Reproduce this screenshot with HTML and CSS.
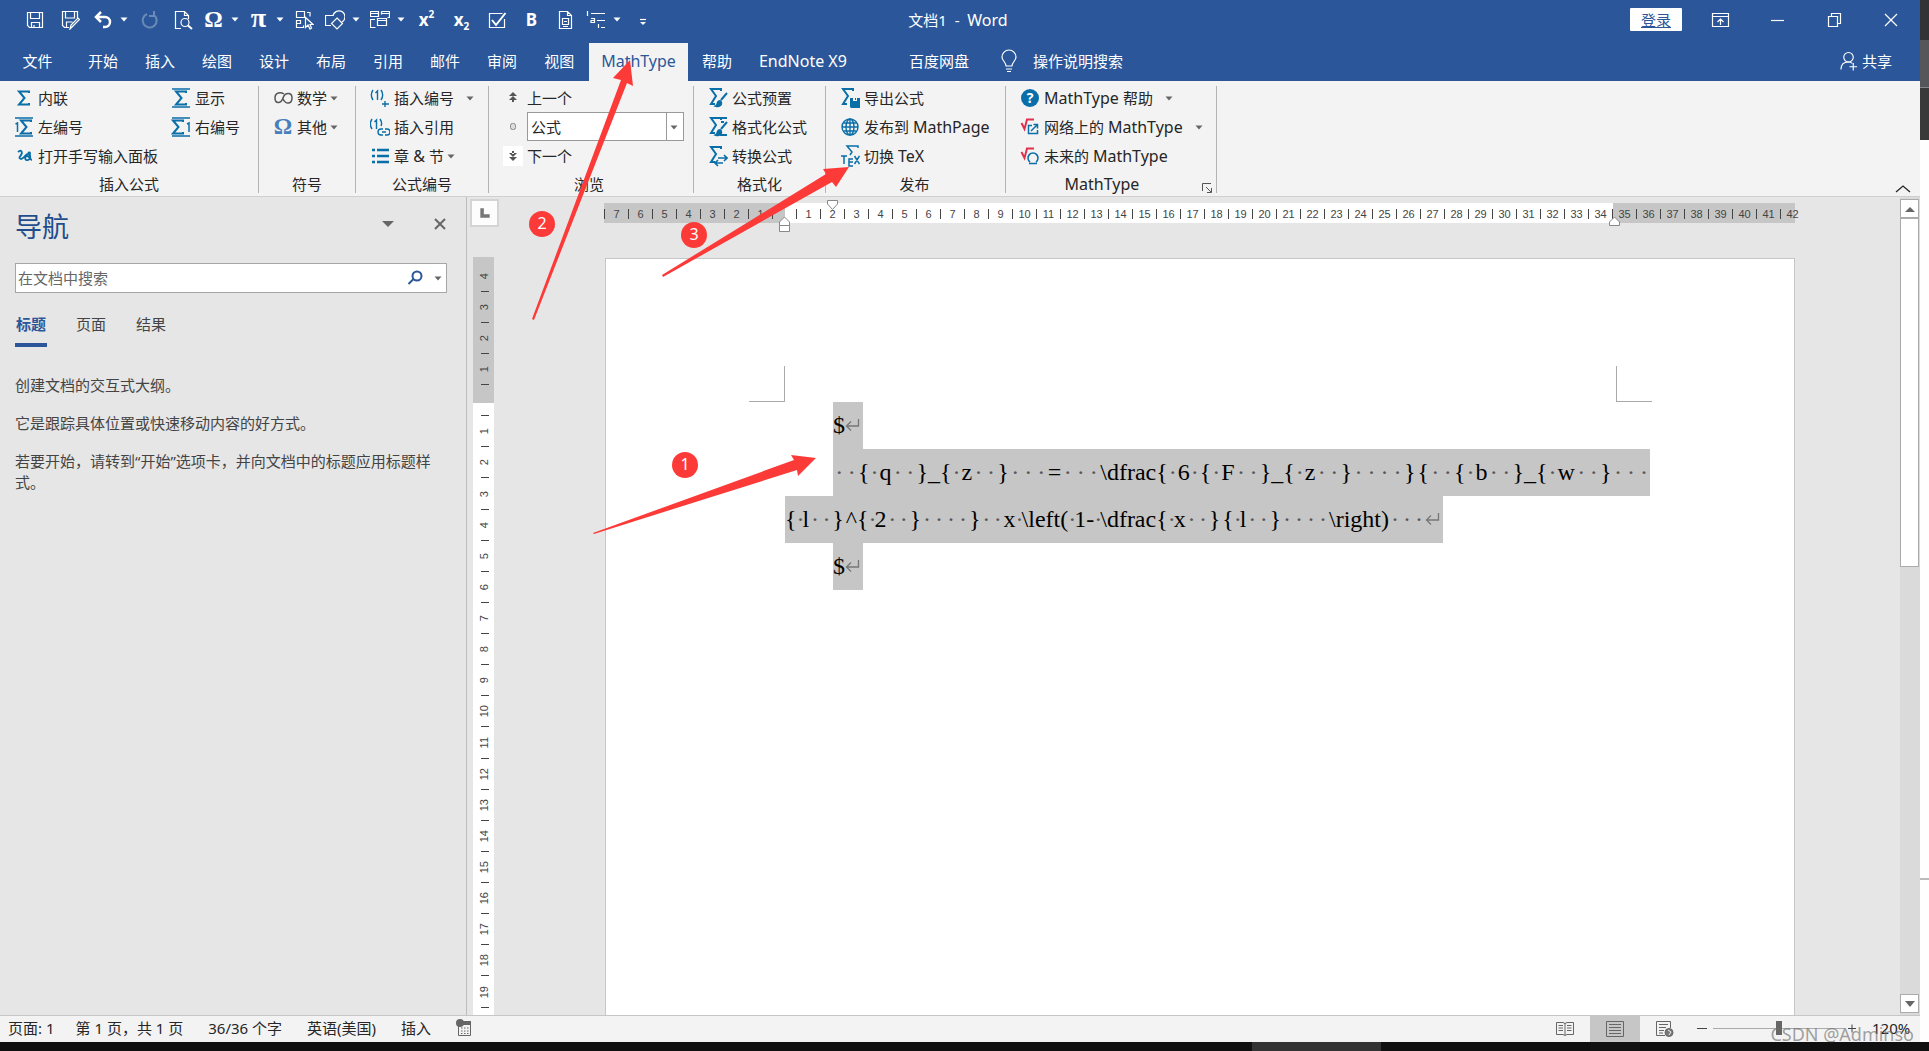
FILE: index.html
```html
<!DOCTYPE html>
<html lang="zh-CN">
<head>
<meta charset="utf-8">
<title>文档1 - Word</title>
<link rel="stylesheet" href="styles.css">
</head>
<body>
<svg class="defs" aria-hidden="true">
  <symbol id="sigma" viewBox="0 0 20 20"><path d="M15 5V3.500H5l5.500 6.500L5 16.500h10V15" fill="none" stroke="currentColor" stroke-width="2"/></symbol>
  <symbol id="sigma-s" viewBox="0 0 20 24"><path d="M13 5V3H3l5 7-5 8h4" fill="none" stroke="currentColor" stroke-width="2"/></symbol>
  <symbol id="caret" viewBox="0 0 8 5"><path d="M0.500 0.500h7L4 4.500z" fill="currentColor"/></symbol>
  <symbol id="enter" viewBox="0 0 16 14"><path d="M13.500 1v7H1.500M6 3.500L1.500 8 6 12.500" fill="none" stroke="#777" stroke-width="1.300"/></symbol>
  <symbol id="root" viewBox="0 0 20 20"><path d="M1.500 6l3 6L7 2.500h7" fill="none" stroke="#e0304e" stroke-width="2"/></symbol>
</svg>
<div class="screen">
<div class="desktop">
<main class="word">
  <header class="titlebar">
    <div class="quick">
      <button aria-label="保存"><svg viewBox="0 0 20 20"><path d="M2.500 2.500h15v15h-13l-2-2zM5.500 2.500v6h9v-6M6.500 17.500v-5h8v5M9 15v2"/></svg></button>
      <button aria-label="另存为"><svg viewBox="0 0 20 20"><path d="M9 17.500H4.500l-2-2v-14h15v7M5.500 2v6h9V2M6.500 17v-5h6M10 19l1-4 7-7 1.500 1.500-7 7z"/></svg></button>
      <span class="split"><button aria-label="撤消"><svg viewBox="0 0 20 20"><path d="M3 7h9a5 5 0 0 1 0 10h-2M8 2L3 7l5 5" stroke-width="2.500"/></svg></button><svg class="c"><use href="#caret"/></svg></span>
      <button class="dim" aria-label="重做"><svg viewBox="0 0 20 20"><path d="M14 5a7 7 0 1 1-7-1M14 1v5h-5" stroke-width="2"/></svg></button>
      <button class="tight" aria-label="打印预览"><svg viewBox="0 0 20 20"><path d="M8 18.500H2.500v-17h9l4 4V9M11.500 1.500v4h4"/><circle cx="12" cy="12.500" r="4"/><path d="M15 15.500l4 3.500" stroke-width="2"/></svg></button>
      <span class="split"><button class="sym" aria-label="符号">Ω</button><svg class="c"><use href="#caret"/></svg></span>
      <span class="split"><button class="sym pi" aria-label="公式">π</button><svg class="c"><use href="#caret"/></svg></span>
      <button class="tight" aria-label="选择"><svg viewBox="0 0 20 20"><path d="M2.500 1.500h8v6h-8zM2.500 10.500h4v3h-4zM2.500 13.500v4h7v-2M13 2.500h3v4"/><path d="M11.500 7.500v10l2.500-2.500 2 4 1.500-1-1.500-3.500h3z" fill="#2b579a"/></svg></button>
      <span class="split"><button aria-label="形状"><svg viewBox="0 0 20 20"><path d="M6 15.500H.5v-10H8"/><path d="M8 6a6 6 0 1 1 9 6"/><path d="M12 8l5.500 5.500L12 19l-5.500-5.500z"/></svg></button><svg class="c"><use href="#caret"/></svg></span>
      <span class="split"><button aria-label="窗口"><svg viewBox="0 0 20 20"><path d="M.5 1.500h8v5h-8zM11.500 1.500h8v6h-2M11.500 1.500v3M5 9.500H.5v8h5M.5 3.500h8M11.500 3.500h8M7.500 8.500h9v7h-9zM7.500 10.500h9"/></svg></button><svg class="c"><use href="#caret"/></svg></span>
      <button class="xs" aria-label="上标">x<sup>2</sup></button>
      <button class="xs" aria-label="下标">x<sub>2</sub></button>
      <button aria-label="复选框"><svg viewBox="0 0 20 20"><path d="M17.500 9v8.500h-15v-14h13"/><path d="M5 10l4 5L18.500 3" stroke-width="2"/></svg></button>
      <button class="xs" aria-label="加粗">B</button>
      <button class="tight" aria-label="页面"><svg viewBox="0 0 20 20"><path d="M4.500 1.500h8l4 4v13h-12zM12.500 1.500v4h4M7.500 8.500h6v6h-6zM9 11.500h3M8 16.500h5"/></svg></button>
      <span class="split"><button aria-label="多级列表"><svg viewBox="0 0 20 20"><path d="M1.500 1v5M5 3.500h14M5 8.500h3.500v4H5v-2h3.500M11 10.500h8M12.500 14v4M15 17.500h4"/></svg></button><svg class="c"><use href="#caret"/></svg></span>
      <button aria-label="自定义"><svg viewBox="0 0 20 20"><path d="M7 9.500h6"/><path d="M7 12h6l-3 3z" fill="#fff" stroke="none"/></svg></button>
    </div>
    <h1>文档1&nbsp; -&nbsp; <span class="lat">Word</span></h1>
    <div class="wincontrols">
      <button class="login">登录</button>
      <button class="wc" aria-label="功能区显示选项"><svg viewBox="0 0 20 20"><path d="M1.500 3.500h16v13h-16zM1.500 6.500h16M9.500 15V9M6.500 12l3-3 3 3"/></svg></button>
      <button class="wc" aria-label="最小化"><svg viewBox="0 0 20 20"><path d="M3 10.500h13"/></svg></button>
      <button class="wc" aria-label="还原"><svg viewBox="0 0 20 20"><path d="M3.500 6.500h9v10h-9zM6.500 6.500v-3h9v10h-3"/></svg></button>
      <button class="wc" aria-label="关闭"><svg viewBox="0 0 20 20"><path d="M3 4l12 12M15 4L3 16"/></svg></button>
    </div>
  </header>
  <nav class="tabs">
    <button class="file">文件</button><button>开始</button><button>插入</button><button>绘图</button><button>设计</button><button>布局</button><button>引用</button><button>邮件</button><button>审阅</button><button>视图</button><button class="active lat">MathType</button><button>帮助</button><button class="lat">EndNote X9</button><button class="baidu">百度网盘</button>
    <button class="tell"><svg viewBox="0 0 18 24"><path d="M6 17c0-4-4-5-4-9a7 7 0 0 1 14 0c0 4-4 5-4 9zM6 20h6M7 22.500h4"/></svg>操作说明搜索</button>
    <button class="share"><svg viewBox="0 0 20 22"><circle cx="10" cy="7" r="5"/><path d="M2 20c0-5 3-8 8-8 2 0 3 .5 4 1.500M11 17h8M15 13v8"/></svg>共享</button>
  </nav>
  <section class="ribbon">
    <div class="group g1">
      <div class="cmds two">
        <button><svg><use href="#sigma"/></svg>内联</button>
        <button><svg viewBox="0 0 20 20"><path d="M1 1h18M1 19h18" stroke="currentColor" stroke-width="1.500"/><use href="#sigma"/></svg>显示</button>
        <button><svg viewBox="0 0 20 20"><path d="M1 1h18M1 19h18M1.500 7l2-1v9" fill="none" stroke="currentColor" stroke-width="1.500"/><use href="#sigma" x="2"/></svg>左编号</button>
        <button><svg viewBox="0 0 20 20"><path d="M1 1h18M1 19h18M16 7l2-1v9" fill="none" stroke="currentColor" stroke-width="1.500"/><use href="#sigma" x="-3"/></svg>右编号</button>
        <button class="wide"><svg viewBox="0 0 20 20"><path d="M4 6c3-3 5 0 3 3-1 2-3 3 0 4 3 0 4-5 7-5 3 0 3 5 0 6-3 1-4-3-1-4 3 0 3 4 5 4M15 9c2-1 1-4-1-2" fill="none" stroke="currentColor" stroke-width="1.800"/></svg>打开手写输入面板</button>
      </div>
      <h2>插入公式</h2>
    </div>
    <div class="group g2">
      <div class="cmds">
        <button><svg class="gray" viewBox="0 0 20 20"><path d="M11 6C8 4 2 4 2 10s6 6 8 0 9-6 9 0-6 7-9 1" fill="none" stroke="currentColor" stroke-width="1.500"/></svg>数学<svg class="c"><use href="#caret"/></svg></button>
        <button><b class="omega">Ω</b>其他<svg class="c"><use href="#caret"/></svg></button>
      </div>
      <h2>符号</h2>
    </div>
    <div class="group g3">
      <div class="cmds">
        <button><svg viewBox="0 0 20 20"><path d="M3 2c-2 3-2 7 0 10M11 2c2 3 2 7 0 10M5.500 5l2-2v9M15 13v6M12 16h7" fill="none" stroke="currentColor" stroke-width="1.400"/></svg>插入编号<svg class="c far"><use href="#caret"/></svg></button>
        <button><svg viewBox="0 0 20 20"><path d="M2 2c-2 3-2 7 0 10M10 2c2 3 2 5 1 7M4.500 5l2-2v9M13 12h-2a2.500 2.500 0 0 0 0 6h2M15 12h2a2.500 2.500 0 0 1 0 6h-2M12 15h4" fill="none" stroke="currentColor" stroke-width="1.400"/></svg>插入引用</button>
        <button><svg viewBox="0 0 20 20"><path d="M2 4h3M2 10h3M2 16h3M7 4h12M7 10h12M7 16h12" stroke="currentColor" stroke-width="2.500"/></svg>章 <span class="lat">&nbsp;&amp;&nbsp;</span> 节<svg class="c"><use href="#caret"/></svg></button>
      </div>
      <h2>公式编号</h2>
    </div>
    <div class="group g4">
      <div class="cmds">
        <button><svg class="dark" viewBox="0 0 20 20"><path d="M10 4l4 4H6zM10 8l4 4H6zM9 11h2v3H9z" fill="currentColor"/></svg>上一个</button>
        <div class="browse"><svg class="dark" viewBox="0 0 20 20"><rect x="7.500" y="6.500" width="5" height="6" rx="2" fill="#ddd" stroke="#888"/></svg><label class="combo"><select aria-label="浏览对象"><option>公式</option></select><span><svg class="c"><use href="#caret"/></svg></span></label></div>
        <button class="next"><svg class="dark" viewBox="0 0 20 20"><path d="M10 15l4-4H6zM10 11l4-4H6zM9 5h2v3H9z" fill="currentColor"/></svg>下一个</button>
      </div>
      <h2>浏览</h2>
    </div>
    <div class="group g5">
      <div class="cmds">
        <button><svg class="lg" viewBox="0 0 20 24"><use href="#sigma-s"/><path d="M19 7l-6 7M12 15c-3 0-2 4-4 5 3 1 6-1 5-4z" fill="currentColor" stroke="currentColor" stroke-width="2"/></svg>公式预置</button>
        <button><svg class="lg" viewBox="0 0 20 24"><use href="#sigma-s"/><path d="M9 3h10M13 7h3M12 20h7" stroke="currentColor" stroke-width="2"/><path d="M19 7l-6 7M12 15c-3 0-2 4-4 5 3 1 6-1 5-4z" fill="currentColor" stroke="currentColor" stroke-width="2"/></svg>格式化公式</button>
        <button><svg class="lg" viewBox="0 0 20 24"><use href="#sigma-s"/><path d="M10 14h9M16 11l3 3-3 3M15 19H7M10 16l-3 3 3 3" fill="none" stroke="currentColor" stroke-width="1.600"/></svg>转换公式</button>
      </div>
      <h2>格式化</h2>
    </div>
    <div class="group g6">
      <div class="cmds">
        <button><svg class="lg" viewBox="0 0 20 24"><use href="#sigma-s"/><path d="M10 12h10v10H11l-1-1z" fill="currentColor"/><path d="M13 12h4v3h-4z" fill="#f3f3f3"/><path d="M15 12h1v2h-1z" fill="currentColor"/></svg>导出公式</button>
        <button><svg viewBox="0 0 20 20"><g fill="none" stroke="currentColor" stroke-width="1.400"><circle cx="10" cy="10" r="8"/><ellipse cx="10" cy="10" rx="4" ry="8"/><path d="M10 2v16M2 10h16M3.500 6h13M3.500 14h13"/></g></svg>发布到&nbsp;<span class="lat">MathPage</span></button>
        <button><svg class="lg" viewBox="0 0 20 24"><path d="M18 4V2H7l5 6-2 3M1 12h6M4 12v8M13 15H9v7h4M9 18h4M14.500 12l5 8M19.500 12l-5 8" fill="none" stroke="currentColor" stroke-width="1.500"/></svg>切换&nbsp;<span class="lat">TeX</span></button>
      </div>
      <h2>发布</h2>
    </div>
    <div class="group g7">
      <div class="cmds">
        <button><span class="q">?</span><span class="lat">MathType&nbsp;</span>帮助<svg class="c mid"><use href="#caret"/></svg></button>
        <button><svg viewBox="0 0 20 20"><use href="#root"/><path d="M12 8.500H8.500v8h9V13M11 14l6-6M13.500 7.500h4v4" fill="none" stroke="currentColor" stroke-width="1.500"/></svg>网络上的&nbsp;<span class="lat">MathType</span><svg class="c mid"><use href="#caret"/></svg></button>
        <button><svg viewBox="0 0 20 20"><use href="#root"/><path d="M10 16a5 5 0 1 1 6 0M9 17.500h8" fill="none" stroke="currentColor" stroke-width="1.600"/></svg>未来的&nbsp;<span class="lat">MathType</span></button>
      </div>
      <h2 class="lat">MathType</h2>
      <button class="launch" aria-label="对话框启动器"><svg viewBox="0 0 10 10"><path d="M.5 8V.5H9M4 4l5 5M9.500 5v4.500H5" fill="none" stroke="currentColor"/></svg></button>
    </div>
    <button class="collapse" aria-label="折叠功能区"><svg viewBox="0 0 16 10"><path d="M1 8l7-6 7 6" fill="none" stroke="currentColor" stroke-width="1.300"/></svg></button>
  </section>
  <section class="work">
    <aside class="pane">
      <div class="panehead"><h2>导航</h2><button aria-label="选项"><svg viewBox="0 0 12 12"><path d="M0 3h12L6 9z" fill="currentColor"/></svg></button><button aria-label="关闭窗格"><svg viewBox="0 0 12 12"><path d="M1 1l10 10M11 1L1 11" stroke="currentColor" stroke-width="2"/></svg></button></div>
      <div class="search"><input type="text" placeholder="在文档中搜索" aria-label="在文档中搜索"><button aria-label="搜索"><svg viewBox="0 0 16 16"><circle cx="10" cy="6" r="4.500"/><path d="M6.500 9L1.500 14"/></svg></button><svg class="c"><use href="#caret"/></svg></div>
      <div class="panetabs"><button class="on">标题</button><button>页面</button><button>结果</button></div>
      <p>创建文档的交互式大纲。</p>
      <p>它是跟踪具体位置或快速移动内容的好方式。</p>
      <p>若要开始，请转到“开始”选项卡，并向文档中的标题应用标题样式。</p>
    </aside>
    <div class="vcol">
      <button class="corner" aria-label="制表符"><svg viewBox="0 0 12 12"><path d="M3.500 2v6.500H10" fill="none" stroke="#777" stroke-width="3"/></svg></button>
      <ol class="vruler" id="vruler"></ol>
    </div>
    <div class="canvas">
      <div class="column">
        <div class="hwrap">
          <ol class="hruler" id="hruler"></ol>
          <svg class="mark first" viewBox="0 0 12 11"><path d="M.5.5h10V4l-5 5.500L.5 4z"/></svg>
          <svg class="mark left" viewBox="0 0 12 16"><path d="M.5 9.500V6l5-5 5 5v3.500zM.5 9.500h10v6H.5z"/></svg>
          <svg class="mark right" viewBox="0 0 12 11"><path d="M.5 9.500V6l5-5 5 5v3.500z"/></svg>
        </div>
        <article class="sheet">
          <i class="crop tl"></i><i class="crop tr"></i>
          <div class="ln ind">$<svg class="ent"><use href="#enter"/></svg></div>
          <div class="ln ind just"><i class="s2">·<b>·</b></i>{<i class="s1">·</i>q<i class="s2">·<b>·</b></i>}_{<i class="s1">·</i>z<i class="s2">·<b>·</b></i>}<i class="s3">·<b>·</b><b>·</b></i>=<i class="s3">·<b>·</b><b>·</b></i>\dfrac{<i class="s1">·</i>6<i class="s1">·</i>{<i class="s1">·</i>F<i class="s2">·<b>·</b></i>}_{<i class="s1">·</i>z<i class="s2">·<b>·</b></i>}<i class="s4">·<b>·</b><b>·</b><b>·</b></i>}<i class="gap"></i>{<i class="s2">·<b>·</b></i>{<i class="s1">·</i>b<i class="s2">·<b>·</b></i>}_{<i class="s1">·</i>w<i class="s2">·<b>·</b></i>}<i class="s3">·<b>·</b><b>·</b></i></div>
          <div class="ln">{<i class="s1">·</i>l<i class="s2">·<b>·</b></i>}<i class="gap"></i>^{<i class="s1">·</i>2<i class="s2">·<b>·</b></i>}<i class="s4">·<b>·</b><b>·</b><b>·</b></i>}<i class="s2">·<b>·</b></i>x<i class="s1">·</i>\left(<i class="s1">·</i>1-<i class="s1">·</i>\dfrac{<i class="s1">·</i>x<i class="s2">·<b>·</b></i>}<i class="gap"></i>{<i class="s1">·</i>l<i class="s2">·<b>·</b></i>}<i class="s4">·<b>·</b><b>·</b><b>·</b></i>\right)<i class="s3">·<b>·</b><b>·</b></i><svg class="ent"><use href="#enter"/></svg></div>
          <div class="ln ind">$<svg class="ent"><use href="#enter"/></svg></div>
        </article>
      </div>
    </div>
    <div class="scroll">
      <button aria-label="向上滚动"><svg viewBox="0 0 10 6"><path d="M0 6l5-5 5 5z" fill="currentColor"/></svg></button>
      <div class="thumb"></div>
      <button class="down" aria-label="向下滚动"><svg viewBox="0 0 10 6"><path d="M0 0h10L5 6z" fill="currentColor"/></svg></button>
    </div>
  </section>
  <footer class="status">
    <span class="pg">页面: 1</span><span>第 1 页，共 1 页</span><span>36/36 个字</span><span>英语(美国)</span><span>插入</span>
    <svg viewBox="0 0 16 18"><path d="M2.500 7v9.500h12v-12H7" fill="none" stroke="#666"/><path d="M7 2h8v4H7z" fill="#666"/><circle cx="4" cy="4" r="4" fill="#666"/><path d="M5 9h8M5 12h8M5 14.500h8" stroke="#666" stroke-dasharray="1.500 1.500"/></svg>
    <div class="views">
      <button aria-label="阅读视图"><svg viewBox="0 0 18 16"><path d="M.5 1.500h6.500l2 1 2-1h6.500v12H11l-2 1-2-1H.5zM9 2v12M2.500 4.500H7M2.500 7H7M2.500 9.500H7M11 4.500h4.500M11 7h4.500M11 9.500h4.500"/></svg></button>
      <button class="on" aria-label="页面视图"><svg viewBox="0 0 18 16"><path d="M.5.5h17v15H.5zM3 3.500h12M3 6.500h12M3 9.500h12M3 12.500h12"/></svg></button>
      <button aria-label="Web 版式"><svg viewBox="0 0 18 16"><path d="M9 14.500H.5V.5h14V7M3 3.500h9M3 6.500h7M3 9.500h5M3 12h4"/><circle cx="13" cy="11.500" r="4" fill="#777"/><path d="M12 9l3 2-2 3" stroke="#f3f3f3"/></svg></button>
    </div>
    <div class="zoom"><button aria-label="缩小"><svg viewBox="0 0 10 10"><path d="M0 5.500h10"/></svg></button><input type="range" min="0" max="100" value="50" aria-label="缩放"><button aria-label="放大"><svg viewBox="0 0 10 10"><path d="M1 5.500h8M5 1.500v8"/></svg></button><output>120%</output></div>
  </footer>
</main>
<div class="behind"><i class="b1"></i><i class="b2"></i><i class="b3"></i><i class="b4"></i></div>
</div>
<div class="taskbar"><i></i></div>
<svg class="notes" width="900" height="560" aria-hidden="true">
  <g fill="#fc3a38">
    <path d="M593 533L794 460l-3-5 25 3-18 18-1-6L594 534z"/>
    <path d="M532 319L621 80l-8-2 17-18 3 26-6-3L534 320z"/>
    <path d="M662 275L826 174l-3-5 26-2-13 20-4-5L663 277z"/>
    <circle cx="542" cy="224" r="13"/><circle cx="694" cy="235" r="13"/><circle cx="685" cy="465" r="13"/>
  </g>
  <g class="num"><text x="542" y="229">2</text><text x="694" y="240">3</text><text x="685" y="470">1</text></g>
</svg>
<div class="watermark">CSDN @Adminso</div>
</div>
<script src="script.js"></script>
</body>
</html>
```
FILE: styles.css
```css
* { box-sizing: border-box; }
body, h1, h2, p, ol { margin: 0; padding: 0; font-weight: normal; }
body { font: 15px/20px "Noto Sans", "Noto Sans CJK SC", sans-serif; color: #262626; }
button, input, select { font: inherit; color: inherit; background: none; border: 0; padding: 0; margin: 0; }
button { white-space: nowrap; }
i { font-style: normal; }
svg { display: block; flex: none; }
ol { list-style: none; }
.defs { position: absolute; width: 0; height: 0; }
.lat { font-size: 16px; }
.c { width: 8px; height: 5px; color: #666; }

.screen { position: relative; display: flex; flex-direction: column; height: 100vh; overflow: hidden; }
.desktop { flex: 1; display: flex; min-height: 0; }
.word { flex: 1; min-width: 0; display: flex; flex-direction: column; }
.behind { width: 9px; display: flex; flex-direction: column; background: #fefefe; }
.b1 { height: 40px; background: #333336; }
.b2 { height: 48px; background: #55565a; border-bottom: 1px solid #888; }
.b3 { height: 52px; background: #393939; }
.b4 { height: 740px; border-bottom: 2px solid #bbb; }
.taskbar { height: 9px; background: #101010; display: flex; padding-left: 1252px; }
.taskbar i { width: 129px; background: #333; }

/* title bar */
.titlebar { height: 43px; background: #2b579a; color: #fff; display: grid; grid-template-columns: 1fr auto 1fr; align-items: center; padding-bottom: 4px; }
.quick { display: flex; align-items: center; padding-left: 17px; }
.quick button { width: 35px; height: 28px; display: flex; align-items: center; justify-content: center; }
.quick .tight { width: 31px; }
.quick button svg { width: 20px; height: 20px; }
.titlebar button svg, .tabs svg { fill: none; stroke: #fff; stroke-width: 1.2; }
.split { display: flex; align-items: center; width: 45px; }
.quick .split button { width: 31px; }
.split .c { color: #fff; margin-left: 2px; }
.dim { opacity: .3; }
.quick .sym { font: bold 23px/24px "Liberation Serif", serif; }
.quick .pi { font-size: 28px; padding-bottom: 4px; }
.quick .xs { font-weight: bold; font-size: 17px; height: 22px; }
.xs sup, .xs sub { font-size: 10px; line-height: 10px; }
.xs sup { align-self: flex-start; }
.xs sub { align-self: flex-end; }
h1 { font-size: 15px; padding-right: 4px; }
.wincontrols { display: flex; justify-content: flex-end; align-items: center; }
.login { background: #fff; color: #2b579a; width: 52px; height: 23px; text-decoration: underline; margin-right: 10px; border-radius: 1px; }
.wc { width: 57px; height: 38px; display: flex; align-items: center; justify-content: center; }
.wc svg { width: 20px; height: 20px; }

/* ribbon tabs */
.tabs { height: 38px; background: #2b579a; color: #fff; display: flex; }
.tabs button { padding: 0 13px 2px 14px; color: #fff; }
.tabs .file { width: 74px; }
.tabs .active { background: #f3f3f3; color: #2b579a; padding: 0 12px 2px; margin-left: 2px; }
.tabs .baidu { margin-left: 35px; }
.tabs .tell { display: flex; align-items: center; gap: 15px; padding-left: 18px; }
.tell svg { width: 18px; height: 24px; }
.tabs .share { display: flex; align-items: center; gap: 4px; margin-left: auto; padding-right: 28px; }
.share svg { width: 19px; height: 22px; }

/* ribbon */
.ribbon { height: 116px; background: #f3f3f3; border-bottom: 1px solid #d0d0d0; display: flex; padding-top: 5px; }
.group { position: relative; height: 107px; border-right: 1px solid #b4b4b4; display: flex; flex-direction: column; }
.group h2 { text-align: center; font-size: 15px; height: 20px; line-height: 28px; }
.group h2.lat { font-size: 16px; padding-right: 32px; }
.cmds { height: 87px; display: grid; grid-template-rows: repeat(3, 29px); margin-top: -3px; }
.cmds button { display: flex; align-items: center; color: #262626; }
.cmds svg { width: 20px; height: 20px; color: #0a6ea8; margin-right: 4px; }
.cmds svg.lg { height: 24px; }
.cmds svg.gray, .cmds svg.dark { color: #555; }
.cmds svg.c { width: 8px; height: 5px; color: #666; margin: 2px 0 0 3px; }
.cmds svg.far { margin-left: 12px; }
.cmds svg.mid { margin-left: 12px; }
.g1 { width: 259px; padding-left: 14px; }
.two { grid-template-columns: 157px 1fr; }
.wide { grid-column: span 2; }
.g1 h2 { padding-right: 14px; }
.g2 { width: 97px; padding-left: 14px; }
.g2 h2 { padding-right: 14px; }
.omega { font: bold 23px/24px "Liberation Serif", serif; color: #4a7ebb; width: 20px; text-align: center; margin-right: 4px; }
.g3 { width: 133px; padding-left: 14px; }
.g3 h2 { padding-right: 14px; }
.g4 { width: 205px; padding: 0 9px 0 14px; }
.g4 h2 { padding-right: 9px; }
.browse { display: flex; align-items: center; }
.combo { flex: 1; height: 29px; border: 1px solid #999; background: #fff; display: flex; }
.combo select { flex: 1; appearance: none; padding-left: 3px; }
.combo span { width: 17px; border-left: 1px solid #999; display: flex; align-items: center; }
.next svg { background: #fff; }
.g5 { width: 132px; padding-left: 14px; }
.g5 h2 { padding-right: 14px; }
.g6 { width: 180px; padding-left: 14px; }
.g6 h2 { padding-right: 16px; }
.g7 { width: 211px; padding-left: 14px; }
.q { width: 18px; height: 18px; border-radius: 9px; background: #0a6ea8; color: #fff; font-weight: bold; font-size: 14px; line-height: 18px; text-align: center; margin: 0 5px 0 1px; }
.launch { position: absolute; right: 4px; bottom: 0; width: 10px; height: 10px; color: #555; }
.launch svg { width: 10px; height: 10px; }
.collapse { margin: auto 9px 2px auto; }
.collapse svg { width: 16px; height: 10px; }

/* work area */
.work { flex: 1; min-height: 0; display: flex; background: #e6e6e6; border-bottom: 1px solid #c6c6c6; }
.pane { width: 467px; border-right: 1px solid #bcbcbc; padding: 14px 19px 0 15px; color: #444; }
.panehead { display: flex; align-items: center; height: 32px; }
.panehead h2 { flex: 1; font-size: 27px; color: #1e4e8c; }
.panehead button { margin: 0 0 6px 40px; }
.panehead button svg { width: 12px; height: 12px; color: #666; }
.panehead button:last-child { margin-right: 1px; }
.search { display: flex; align-items: center; margin-top: 20px; height: 30px; border: 1px solid #a6a6a6; background: #fff; padding: 0 4px 0 2px; }
.search input { flex: 1; min-width: 0; outline: 0; }
.search input::placeholder { color: #666; opacity: 1; }
.search button svg { width: 16px; height: 16px; fill: none; stroke: #2b579a; stroke-width: 2; margin-right: 11px; }
.panetabs { display: flex; gap: 28px; margin: 20px 0 28px; }
.panetabs button { width: 32px; height: 34px; padding-bottom: 8px; border-bottom: 4px solid transparent; }
.panetabs .on { color: #2b579a; font-weight: bold; border-color: #2b579a; }
.pane p { line-height: 21px; margin-bottom: 17px; }

.vcol { width: 33px; padding: 4px 0 0 5px; display: flex; flex-direction: column; }
.corner { width: 25px; height: 24px; flex: none; background: #fdfdfd; outline: 2px solid #d4d4d4; display: flex; align-items: center; justify-content: center; }
.corner svg { width: 14px; height: 14px; }
.vruler { width: 21px; margin: 32px 0 0 1px; padding-top: 4px; flex: 1; min-height: 0; overflow: hidden; background: linear-gradient(#c6c6c6 146px, #fff 146px); }
.vruler li { position: relative; height: 31px; display: flex; align-items: center; justify-content: center; font: 11px/13px "Liberation Sans", sans-serif; color: #444; }
.vruler li:nth-child(8n) { height: 32px; }
.vruler li::after { content: ""; position: absolute; left: 8px; right: 5px; bottom: 0; height: 1px; background: #444; }
.vruler span { writing-mode: vertical-rl; transform: rotate(180deg); padding-right: 2px; }

.canvas { flex: 1; min-width: 0; overflow: hidden; padding-top: 6px; }
.column { width: 1190px; height: 100%; margin: 0 auto; display: flex; flex-direction: column; }
.hwrap { position: relative; margin-left: -1px; height: 20px; flex: none; background: linear-gradient(90deg, #c6c6c6 181px, #fff 181px, #fff 1009px, #c6c6c6 1009px); }
.hruler { display: flex; padding-top: 6px; }
.hruler li { flex: none; width: 24px; height: 10px; border-left: 1px solid #444; text-align: center; font: 11px/11px "Liberation Sans", sans-serif; color: #444; }
.mark { position: absolute; width: 12px; fill: #fff; stroke: #888; }
.first { left: 223px; top: -3px; height: 11px; }
.left { left: 175px; top: 13px; height: 16px; }
.right { left: 1005px; top: 13px; height: 11px; }
.sheet { position: relative; flex: 1; margin-top: 35px; background: #fff; border: 1px solid #c6c6c6; border-bottom: 0; padding: 143px 0 0 179px; font: 24px/47px "Liberation Serif", serif; color: #000; }
.crop { position: absolute; top: 107px; width: 36px; height: 36px; border-bottom: 1px solid #aaa; }
.tl { left: 143px; border-right: 1px solid #aaa; }
.tr { right: 142px; border-left: 1px solid #aaa; }
.ln { width: fit-content; height: 47px; white-space: nowrap; background: #c6c6c6; display: flex; --s1: 6px; --s2: 23px; --s3: 36px; --s4: 48px; }
.just { --s1: 10px; --s2: 25px; --s3: 39px; --s4: 52px; }
.ind { margin-left: 48px; }
.ln i { display: flex; justify-content: space-around; color: #555; flex: none; }
.ln b { font-weight: normal; }
.s1 { width: var(--s1); }
.s2 { width: var(--s2); }
.s3 { width: var(--s3); }
.s4 { width: var(--s4); }
.gap { width: 2px; }
.ent { width: 16px; height: 14px; margin: 16px 2px 0 0; }

.scroll { width: 20px; padding: 2px 1px 2px 0; background: #dadada; display: flex; flex-direction: column; }
.scroll button { height: 19px; border: 1px solid #ababab; background: #fff; display: flex; align-items: center; justify-content: center; color: #666; }
.scroll button svg { width: 10px; height: 6px; }
.thumb { height: 349px; background: #fff; border: 1px solid #ababab; }
.scroll .down { margin-top: auto; }

.status { height: 26px; background: #f3f3f3; display: flex; align-items: center; padding: 0 0 2px 8px; }
.status span { margin-right: 25px; }
.status .pg { margin-right: 21px; }
.status > svg { width: 16px; height: 18px; }
.views { margin: 0 0 -2px auto; display: flex; align-self: stretch; }
.views button { width: 50px; display: flex; align-items: center; justify-content: center; }
.views .on { background: #c6c6c6; }
.views svg { width: 18px; height: 16px; fill: none; stroke: #666; }
.zoom { display: flex; align-items: center; margin-left: 7px; padding-right: 8px; }
.zoom svg { width: 10px; height: 10px; stroke: #444; fill: none; }
.zoom input { appearance: none; width: 132px; height: 16px; margin: 0 2px 0 6px; background: linear-gradient(#aaa, #aaa) center / 100% 1px no-repeat; }
.zoom input::-webkit-slider-thumb { appearance: none; width: 6px; height: 14px; background: #666; }
.zoom output { margin-left: 15px; width: 40px; }

/* red marks drawn over the window */
.notes { position: absolute; left: 0; top: 0; pointer-events: none; }
.num { fill: #fff; font-size: 16px; text-anchor: middle; }
.watermark { position: absolute; right: 15px; bottom: 5px; font-size: 18px; line-height: 24px; color: rgba(110, 110, 110, .65); }
```
FILE: script.js
```js
// Fill both rulers with their numbered cells; the cell at zero stays blank.
function fill(id, before, after) {
  const list = document.getElementById(id);
  for (let n = -before; n <= after; n++) {
    const cell = document.createElement('li');
    const label = document.createElement('span');
    label.textContent = n === 0 ? '' : Math.abs(n);
    cell.append(label);
    list.append(cell);
  }
}
fill('hruler', 7, 42);
fill('vruler', 4, 19);
```
